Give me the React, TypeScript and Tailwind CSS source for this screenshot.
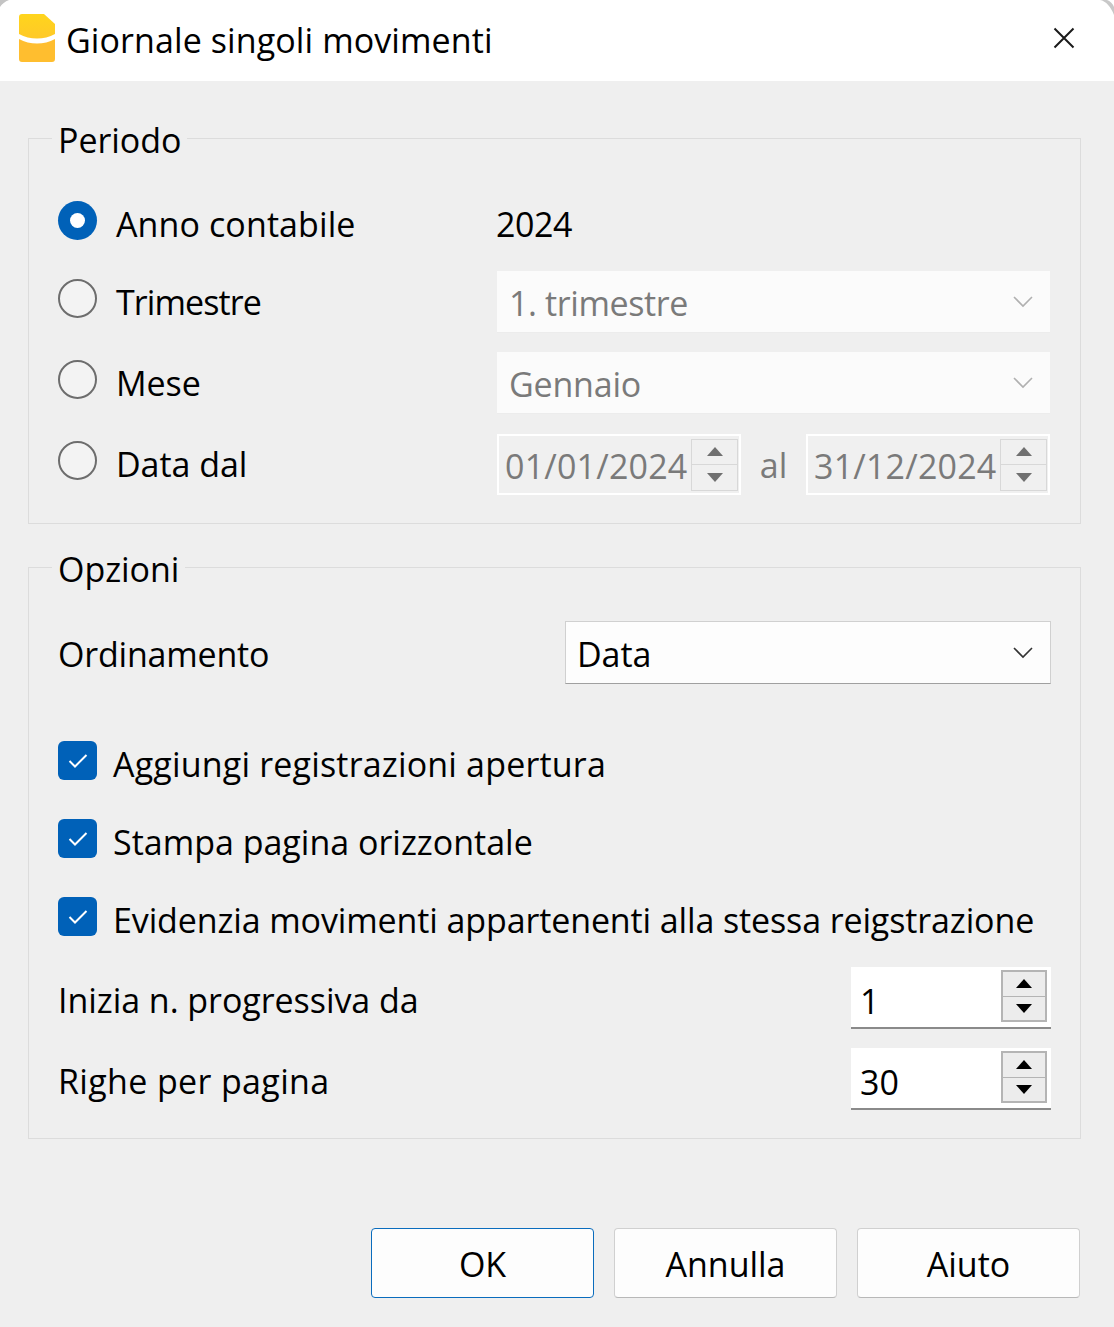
import type { ReactNode } from "react";

// ─── Small drawings ───────────────────────────────────────────

function AppIcon() {
  return (
    <svg width="38" height="48" viewBox="0 0 38 48" className="-mt-[5px] shrink-0">
      <defs>
        <linearGradient id="top" x1="0" y1="0" x2="0" y2="1">
          <stop offset="0" stopColor="#ffd51c" />
          <stop offset="1" stopColor="#ffc928" />
        </linearGradient>
      </defs>
      <path d="M4 0H26L37 10V20C26 26 12 26 1 20V3C1 1 2 0 4 0Z" fill="url(#top)" />
      <path d="M1 25C12 31 26 31 37 25V45C37 47 36 48 34 48H4C2 48 1 47 1 45Z" fill="#ffbe2f" />
    </svg>
  );
}

function Chevron({ color }: { color: string }) {
  return (
    <svg width="20" height="12" viewBox="0 0 20 12" fill="none" stroke={color} strokeWidth="1.6">
      <path d="M1 1L10 10L19 1" />
    </svg>
  );
}

function Check() {
  return (
    <svg width="20" height="16" viewBox="0 0 20 16" fill="none" stroke="#ffffff" strokeWidth="2">
      <path d="M1.5 8L7 13.5L18.5 2" />
    </svg>
  );
}

// ─── Controls ────────────────────────────────────────────────

function Radio({ on }: { on?: boolean }) {
  return on ? (
    <span className="mb-[7px] flex h-[39px] w-[39px] shrink-0 items-center justify-center rounded-full bg-[#0061b8]">
      <span className="h-[15px] w-[15px] rounded-full bg-white" />
    </span>
  ) : (
    <span className="mb-[8px] h-[39px] w-[39px] shrink-0 rounded-full border-2 border-[#6d6d6d] bg-[#f3f3f3]" />
  );
}

function DisabledCombo({ label, spacing }: { label: string; spacing?: string }) {
  return (
    <div className="flex h-[62px] w-[553px] items-center justify-between border-b border-[#ececec] bg-[#fbfbfb] pl-[12px] pr-[17px] text-[#7a7a7a]">
      <span className={"pt-[3px] " + (spacing ?? "")}>{label}</span>
      <Chevron color="#b0b0b0" />
    </div>
  );
}

function DateBox({ value }: { value: string }) {
  return (
    <div className="flex h-[61px] w-[244px] items-center justify-between border-2 border-white bg-[#f0f0f0] pl-[6px] pr-[1px] text-[#7a7a7a]">
      <span className="pt-[4px] tracking-[0.2px]">{value}</span>
      <div className="flex h-[52px] w-[47px] flex-col border border-[#d8d8d8]">
        <div className="flex flex-1 items-center justify-center overflow-hidden border-b border-[#d8d8d8]">
          <svg width="16" height="9" viewBox="0 0 16 9" fill="#707070"><path d="M8 0L16 9H0Z" /></svg>
        </div>
        <div className="flex flex-1 items-center justify-center overflow-hidden">
          <svg width="16" height="9" viewBox="0 0 16 9" fill="#707070"><path d="M0 0H16L8 9Z" /></svg>
        </div>
      </div>
    </div>
  );
}

function Spin({ value }: { value: string }) {
  return (
    <div className="flex h-[62px] w-[200px] items-center justify-between border-b-2 border-[#8a8a8a] bg-white pl-[9px] pr-[4px] text-black">
      <span className="pt-[8px]">{value}</span>
      <div className="mb-[2px] flex h-[52px] w-[46px] flex-col border-2 border-[#b4b4b4] bg-[#ececec]">
        <div className="flex flex-1 items-center justify-center border-b border-[#b4b4b4]">
          <svg width="16" height="9" viewBox="0 0 16 9" fill="#000000"><path d="M8 0L16 9H0Z" /></svg>
        </div>
        <div className="flex flex-1 items-center justify-center">
          <svg width="16" height="9" viewBox="0 0 16 9" fill="#000000"><path d="M0 0H16L8 9Z" /></svg>
        </div>
      </div>
    </div>
  );
}

function CheckRow({ label, spacing }: { label: string; spacing: string }) {
  return (
    <div className="flex h-[39px] items-center gap-[16px]">
      <span className="flex h-[39px] w-[39px] shrink-0 items-center justify-center rounded-[6px] bg-[#0061b8]">
        <Check />
      </span>
      <span className={"whitespace-nowrap pt-[8px] " + spacing}>{label}</span>
    </div>
  );
}

function Group({ title, children }: { title: string; children: ReactNode }) {
  return (
    <fieldset className="w-[1053px] border border-[#dcdcdc] px-[29px]">
      <legend className="-ml-[6px] h-[48px] px-[6px] leading-[52px] text-black">{title}</legend>
      {children}
    </fieldset>
  );
}

function PushButton({ label, primary }: { label: string; primary?: boolean }) {
  return (
    <button
      className={
        primary
          ? "h-[70px] w-[223px] rounded-[4px] border border-[#0a6cbd] bg-[#fdfdfd] pt-[3px] text-black"
          : "h-[70px] w-[223px] rounded-[4px] border border-[#d0d0d0] border-b-[#b8b8b8] bg-[#fdfdfd] pt-[3px] text-black"
      }
    >
      {label}
    </button>
  );
}

// ─── Dialog ──────────────────────────────────────────────────

export default function App() {
  return (
    <div className="relative flex h-[1327px] w-[1114px] flex-col bg-[#efefef] font-['Open_Sans','Noto_Sans',sans-serif] text-[34px] tracking-[-0.05px] text-black">
      {/* Angoli arrotondati della finestra */}
      <svg width="10" height="8" viewBox="0 0 10 8" className="absolute left-0 top-0">
        <path d="M0 7C2 4 5 1.5 9 0H0Z" fill="#c4c4c4" />
      </svg>
      <svg width="16" height="16" viewBox="0 0 16 16" className="absolute right-0 top-0">
        <path d="M2 0C8 1 13 7 16 15V0Z" fill="#c8c8c8" />
        <path d="M9 0C12 1 15 4 16 7V0Z" fill="#ffffff" />
      </svg>

      {/* Barra titolo */}
      <div className="flex h-[81px] shrink-0 items-center bg-white pl-[18px] pr-[39px]">
        <AppIcon />
        <span className="ml-[10px] flex-1 tracking-[0.1px]">Giornale singoli movimenti</span>
        <svg width="22" height="22" viewBox="0 0 22 22" stroke="#1a1a1a" strokeWidth="2" className="-mt-[6px]">
          <path d="M1.5 1.5L20.5 20.5M20.5 1.5L1.5 20.5" />
        </svg>
      </div>

      <div className="flex flex-1 flex-col pl-[28px] pt-[33px]">
        <Group title="Periodo">
          <div className="pt-[32px]">
            <div className="flex h-[60px] items-center">
              <Radio on />
              <span className="ml-[19px] w-[381px] tracking-[0.1px]">Anno contabile</span>
              <span className="-ml-[1px] tracking-[-0.4px]">2024</span>
            </div>
            <div className="mt-[17px] flex h-[62px] items-center">
              <Radio />
              <span className="ml-[19px] w-[381px] tracking-[-0.9px]">Trimestre</span>
              <DisabledCombo label="1. trimestre" spacing="tracking-[-0.4px]" />
            </div>
            <div className="mt-[19px] flex h-[62px] items-center">
              <Radio />
              <span className="ml-[19px] w-[381px]">Mese</span>
              <DisabledCombo label="Gennaio" spacing="tracking-[-0.2px]" />
            </div>
            <div className="mt-[20px] flex h-[61px] items-center">
              <Radio />
              <span className="ml-[19px] w-[381px]">Data dal</span>
              <DateBox value="01/01/2024" />
              <span className="w-[65px] pt-[2px] text-center text-[#7a7a7a]">al</span>
              <DateBox value="31/12/2024" />
            </div>
          </div>
          <div className="h-[28px]" />
        </Group>

        <div className="h-[19px]" />

        <Group title="Opzioni">
          <div className="pt-[30px]">
            <div className="flex h-[63px] items-center justify-between">
              <span className="pt-[4px] tracking-[-0.2px]">Ordinamento</span>
              <div className="flex h-[63px] w-[486px] items-center justify-between border border-[#d0d0d0] border-b-[#a0a0a0] bg-[#fdfdfd] pl-[11px] pr-[17px]">
                <span className="pt-[4px]">Data</span>
                <Chevron color="#333333" />
              </div>
            </div>
            <div className="mt-[57px] flex flex-col gap-[39px]">
              <CheckRow label="Aggiungi registrazioni apertura" spacing="tracking-[0.18px]" />
              <CheckRow label="Stampa pagina orizzontale" spacing="tracking-[0px]" />
              <CheckRow label="Evidenzia movimenti appartenenti alla stessa reigstrazione" spacing="tracking-[-0.12px]" />
            </div>
            <div className="mt-[31px] flex h-[62px] items-center justify-between">
              <span className="pt-[4px]">Inizia n. progressiva da</span>
              <Spin value="1" />
            </div>
            <div className="mt-[19px] flex h-[62px] items-center justify-between">
              <span className="pt-[4px] tracking-[0.35px]">Righe per pagina</span>
              <Spin value="30" />
            </div>
          </div>
          <div className="h-[28px]" />
        </Group>

        <div className="mt-[89px] flex justify-end gap-[20px] pr-[34px]">
          <PushButton label="OK" primary />
          <PushButton label="Annulla" />
          <PushButton label="Aiuto" />
        </div>
      </div>
    </div>
  );
}
